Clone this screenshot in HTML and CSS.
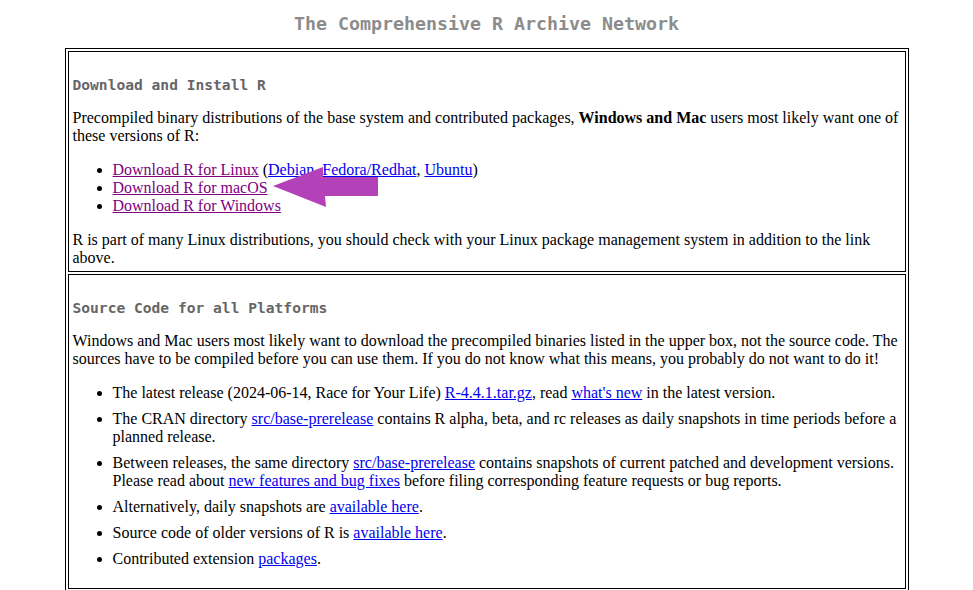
FILE: index.html
```html
<!DOCTYPE html>
<html>
<head>
<meta charset="utf-8">
<title>The Comprehensive R Archive Network</title>
<link rel="stylesheet" href="styles.css">
</head>
<body>
<h1 class="title">The Comprehensive R Archive Network</h1>
<table class="frame">
<tr><td class="box">
<h3 class="head">Download and Install R</h3>
<p class="para">Precompiled binary distributions of the base system and contributed packages, <b>Windows and Mac</b> users most likely want one of these versions of R:</p>
<ul class="list">
<li><a class="visited" href="#">Download R for Linux</a> (<a href="#">Debian</a>, <a href="#">Fedora/Redhat</a>, <a href="#">Ubuntu</a>)</li>
<li><a class="visited" href="#">Download R for macOS</a></li>
<li><a class="visited" href="#">Download R for Windows</a></li>
</ul>
<p class="para last">R is part of many Linux distributions, you should check with your Linux package management system in addition to the link above.</p>
</td></tr>
<tr><td class="box">
<h3 class="head">Source Code for all Platforms</h3>
<p class="para">Windows and Mac users most likely want to download the precompiled binaries listed in the upper box, not the source code. The sources have to be compiled before you can use them. If you do not know what this means, you probably do not want to do it!</p>
<ul class="list spaced">
<li>The latest release (2024-06-14, Race for Your Life) <a href="#">R-4.4.1.tar.gz</a>, read <a href="#">what's new</a> in the latest version.</li>
<li>The CRAN directory <a href="#">src/base-prerelease</a> contains R alpha, beta, and rc releases as daily snapshots in time periods before a planned release.</li>
<li>Between releases, the same directory <a href="#">src/base-prerelease</a> contains snapshots of current patched and development versions. Please read about <a href="#">new features and bug fixes</a> before filing corresponding feature requests or bug reports.</li>
<li>Alternatively, daily snapshots are <a href="#">available here</a>.</li>
<li>Source code of older versions of R is <a href="#">available here</a>.</li>
<li>Contributed extension <a href="#">packages</a>.</li>
</ul>
</td></tr>
</table>
<svg class="arrow" width="120" height="50" viewBox="268 162 120 50">
<polygon points="273,186 323,167 323,177 378,177 378,196 325,196 326,207" fill="#b341b8"/>
</svg>
</body>
</html>
```
FILE: styles.css
```css
html, body {
  background: #fff;
  color: #000;
}
body {
  margin: 8px;
  font-family: "Liberation Serif", "Times New Roman", serif;
  font-size: 16px;
  line-height: 18px;
}
a {
  color: #0000ee;
}
a.visited {
  color: #800080;
}
.title {
  margin: 5px 0 13px;
  text-align: center;
  font-family: "DejaVu Sans Mono", monospace;
  font-weight: bold;
  font-size: 18.3px;
  line-height: 22px;
  color: #8c8c8c;
}
.frame {
  width: 844px;
  margin: 0 auto;
  border: 1px solid #000;
  border-spacing: 2px;
}
.box {
  border: 1px solid #000;
  padding: 4px;
  vertical-align: top;
}
.head {
  margin: 20px 0 15px;
  font-family: "DejaVu Sans Mono", monospace;
  font-weight: bold;
  font-size: 14.6px;
  line-height: 18px;
  color: #666;
}
.para {
  margin: 0 0 16px;
}
.para.last {
  margin-bottom: 0;
}
.list {
  margin: 0 0 16px;
  padding-left: 40px;
}
.spaced li {
  margin-bottom: 8px;
}
.arrow {
  position: absolute;
  left: 268px;
  top: 162px;
}
```
